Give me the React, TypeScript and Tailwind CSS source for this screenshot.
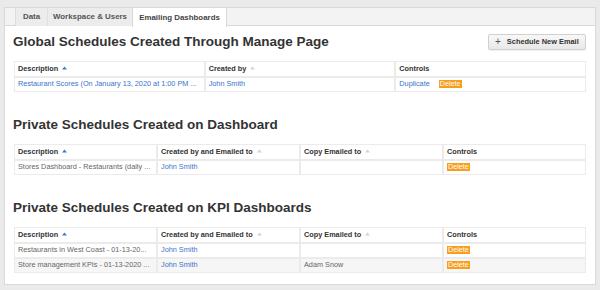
import type { ReactNode } from 'react';

const FONT = { fontFamily: '"Liberation Sans", Arial, Helvetica, sans-serif' };

type Cell = { text?: string; link?: boolean; del?: boolean; dup?: boolean };

function SortArrow({ active }: { active?: boolean }) {
  return (
    <svg width="5" height="4" viewBox="0 0 5 4" className="ml-[4px] inline-block align-[1px]">
      <path d="M0 3.5 L2.5 0.5 L5 3.5 Z" fill={active ? '#3b7ad6' : '#d3d3d3'} />
    </svg>
  );
}

function DeleteBadge() {
  return (
    <span className="inline-block h-[8px] bg-[#f99d1c] px-px text-[7.2px] leading-[8px] text-white">
      Delete
    </span>
  );
}

function Th({ children, sort, active }: { children: ReactNode; sort?: boolean; active?: boolean }) {
  return (
    <th className="h-[16px] border border-[#ebebeb] px-[3px] py-0 text-left align-middle text-[7.3px] font-bold text-[#333]">
      {children}
      {sort && <SortArrow active={active} />}
    </th>
  );
}

function Td({ cell, striped }: { cell: Cell; striped?: boolean }) {
  return (
    <td
      className={`h-[15px] border border-[#ebebeb] px-[3px] py-0 align-middle text-[7.3px] ${
        striped ? 'bg-[#f6f6f6]' : 'bg-white'
      }`}
    >
      {cell.dup && <span className="mr-[9px] text-[#3a74c9]">Duplicate</span>}
      {cell.del && <DeleteBadge />}
      {cell.text && (
        <span className={cell.link ? 'text-[#3a74c9]' : 'text-[#666]'}>{cell.text}</span>
      )}
    </td>
  );
}

function ScheduleTable({
  headers,
  rows,
}: {
  headers: { label: string; sort?: boolean; active?: boolean }[];
  rows: Cell[][];
}) {
  return (
    <table className="ml-px w-[572px] table-fixed border-separate border-spacing-0">
      <thead>
        <tr>
          {headers.map((h) => (
            <Th key={h.label} sort={h.sort} active={h.active}>
              {h.label}
            </Th>
          ))}
        </tr>
      </thead>
      <tbody>
        {rows.map((r, i) => (
          <tr key={i}>
            {r.map((c, j) => (
              <Td key={j} cell={c} striped={i % 2 === 1} />
            ))}
          </tr>
        ))}
      </tbody>
    </table>
  );
}

function Title({ children }: { children: ReactNode }) {
  return <h2 className="text-[13.5px] font-bold leading-[16px] text-[#333]">{children}</h2>;
}

export default function App() {
  const privateHeaders = [
    { label: 'Description', sort: true, active: true },
    { label: 'Created by and Emailed to', sort: true },
    { label: 'Copy Emailed to', sort: true },
    { label: 'Controls' },
  ];

  return (
    <div className="min-h-[290px] bg-[#eaeaea] pl-[4px] pr-[4px] pt-[7px]" style={FONT}>
      <div className="h-[278px] border border-[#dadada] bg-white">
        {/* tabs */}
        <div className="flex h-[18px] border-b border-[#d9d9d9] bg-[#f3f3f3] pl-[10px]">
          <div className="flex h-[18px] w-[32px] items-center justify-center border-l border-[#dcdcdc] bg-[#ececec] text-[7.9px] font-bold text-[#555]">
            Data
          </div>
          <div className="flex h-[18px] w-[85px] items-center justify-center border-l border-[#e0e0e0] bg-[#ececec] text-[7.9px] font-bold text-[#555]">
            Workspace &amp; Users
          </div>
          <div className="flex h-[19px] w-[95px] items-center justify-center border-x border-[#d9d9d9] bg-white text-[7.9px] font-bold text-[#444]">
            Emailing Dashboards
          </div>
        </div>

        <div className="pl-[8px] pr-[9px] pt-[8px]">
          <div className="flex items-center justify-between">
            <Title>Global Schedules Created Through Manage Page</Title>
            <button className="flex h-[16px] w-[98px] items-center rounded-[2px] border border-[#d0d0d0] bg-gradient-to-b from-[#f8f8f8] to-[#e8e8e8] pl-[6px] text-[7.4px] font-bold text-[#333] shadow-[0_1px_0_rgba(0,0,0,0.05)]">
              <span className="mr-[6px] text-[10px] font-normal leading-none text-[#555]">+</span>
              Schedule New Email
            </button>
          </div>

          <div className="mt-[11px]">
            <ScheduleTable
              headers={[
                { label: 'Description', sort: true, active: true },
                { label: 'Created by', sort: true },
                { label: 'Controls' },
              ]}
              rows={[
                [
                  { text: 'Restaurant Scores (On January 13, 2020 at 1:00 PM ...', link: true },
                  { text: 'John Smith', link: true },
                  { dup: true, del: true },
                ],
              ]}
            />
          </div>

          <div className="mt-[25px]">
            <Title>Private Schedules Created on Dashboard</Title>
          </div>
          <div className="mt-[11px]">
            <ScheduleTable
              headers={privateHeaders}
              rows={[
                [
                  { text: 'Stores Dashboard - Restaurants (daily ...' },
                  { text: 'John Smith', link: true },
                  {},
                  { del: true },
                ],
              ]}
            />
          </div>

          <div className="mt-[25px]">
            <Title>Private Schedules Created on KPI Dashboards</Title>
          </div>
          <div className="mt-[11px]">
            <ScheduleTable
              headers={privateHeaders}
              rows={[
                [
                  { text: 'Restaurants in West Coast - 01-13-20...' },
                  { text: 'John Smith', link: true },
                  {},
                  { del: true },
                ],
                [
                  { text: 'Store management KPIs - 01-13-2020 ...' },
                  { text: 'John Smith', link: true },
                  { text: 'Adam Snow' },
                  { del: true },
                ],
              ]}
            />
          </div>
        </div>
      </div>
    </div>
  );
}
